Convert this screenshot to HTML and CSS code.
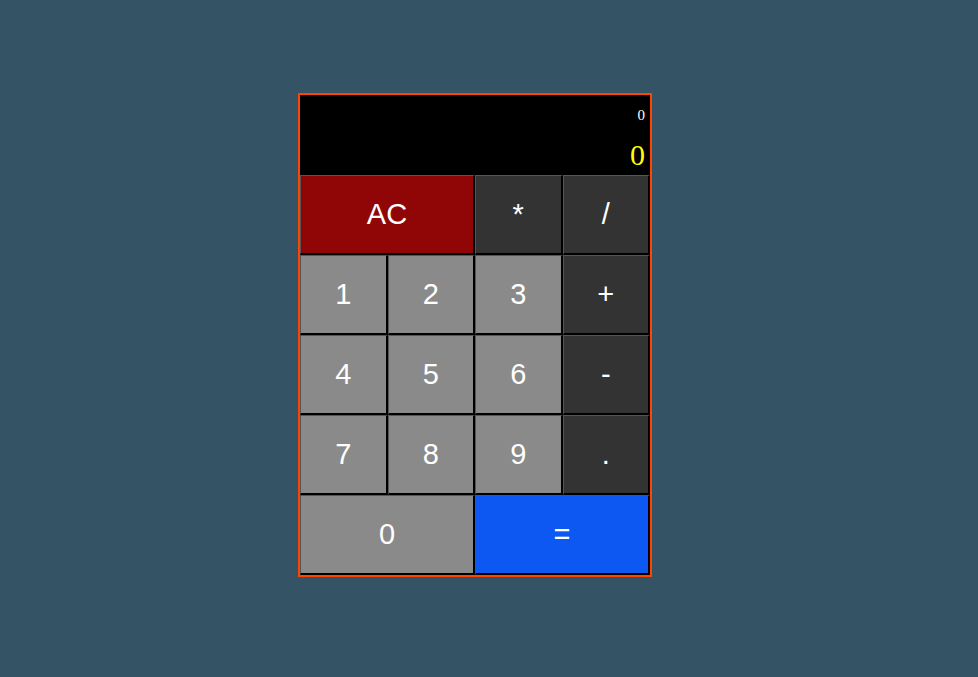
FILE: index.html
```html
<!DOCTYPE html>
<html>
<head>
<meta charset="utf-8">
<title>Calculator</title>
<link rel="stylesheet" href="styles.css">
</head>
<body>
<div class="calculator">
  <div class="display">
    <div class="formula">0</div>
    <div class="output">0</div>
  </div>
  <div class="keys">
    <button class="key key-clear wide">AC</button>
    <button class="key key-op">*</button>
    <button class="key key-op">/</button>
    <button class="key key-num">1</button>
    <button class="key key-num">2</button>
    <button class="key key-num">3</button>
    <button class="key key-op">+</button>
    <button class="key key-num">4</button>
    <button class="key key-num">5</button>
    <button class="key key-num">6</button>
    <button class="key key-op">-</button>
    <button class="key key-num">7</button>
    <button class="key key-num">8</button>
    <button class="key key-num">9</button>
    <button class="key key-op">.</button>
    <button class="key key-num wide">0</button>
    <button class="key key-equals wide">=</button>
  </div>
</div>
</body>
</html>
```

FILE: styles.css
```css
html, body {
  margin: 0;
  padding: 0;
}
body {
  background: #345466;
  width: 978px;
  height: 677px;
  padding: 93px 0 0 298px;
  box-sizing: border-box;
}
.calculator {
  width: 350px;
  border: 2px solid #ff4500;
  background: #000;
}
.display {
  height: 80px;
  background: #000;
  padding: 0 5px 0 0;
  box-sizing: border-box;
  text-align: right;
  font-family: "Liberation Serif", "Times New Roman", serif;
}
.formula {
  color: #fff;
  font-size: 15px;
  line-height: 15px;
  padding-top: 13px;
}
.output {
  color: #ffff00;
  font-family: "Liberation Serif", "Times New Roman", serif;
  font-size: 30px;
  line-height: 30px;
  padding-top: 17px;
}
.keys {
  display: grid;
  grid-template-columns: repeat(4, 1fr);
  grid-auto-rows: 80px;
}
.key {
  margin: 0;
  padding: 0;
  border-style: solid;
  border-width: 1px 2px 2px 1px;
  border-color: #555 #000 #000 #555;
  color: #fff;
  font-family: "Liberation Sans", Arial, sans-serif;
  font-size: 29px;
  cursor: pointer;
}
.wide {
  grid-column: span 2;
}
.key-clear {
  background: #900606;
}
.key-op {
  background: #333;
}
.key-num {
  background: #8a8a8a;
}
.key-equals {
  background: #0d57f2;
}
```
